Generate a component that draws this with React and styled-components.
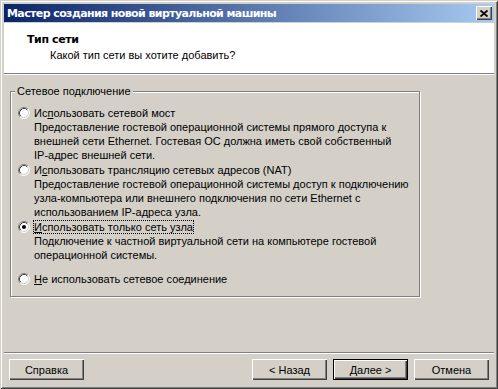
import React from "react";
import styled, { createGlobalStyle } from "styled-components";

const GlobalStyle = createGlobalStyle`
  html, body {
    margin: 0;
    padding: 0;
    background: #d4d0c8;
  }
  body {
    font-family: "Liberation Sans", Arial, sans-serif;
    font-size: 11px;
    color: #000;
  }
`;

const options = [
  {
    id: "bridge",
    label: ["Ис", "п", "ользовать сетевой мост"],
    desc: [
      "Предоставление гостевой операционной системы прямого доступа к",
      "внешней сети Ethernet. Гостевая ОС должна иметь свой собственный",
      "IP-адрес внешней сети.",
    ],
  },
  {
    id: "nat",
    label: ["И", "с", "пользовать трансляцию сетевых адресов (NAT)"],
    desc: [
      "Предоставление гостевой операционной системы доступ к подключению",
      "узла-компьютера или внешнего подключения по сети Ethernet с",
      "использованием IP-адреса узла.",
    ],
  },
  {
    id: "host",
    label: ["", "И", "спользовать только сеть узла"],
    desc: [
      "Подключение к частной виртуальной сети на компьютере гостевой",
      "операционной системы.",
    ],
    checked: true,
  },
  {
    id: "none",
    label: ["", "Н", "е использовать сетевое соединение"],
    desc: [],
    spaced: true,
  },
];

const Radio = ({ checked }) => (
  <RadioIcon width="12" height="12" viewBox="0 0 12 12">
    <circle cx="6" cy="6" r="5" fill="#fff" />
    <path d="M2.11 9.89 A5.5 5.5 0 0 1 9.89 2.11" fill="none" stroke="#808080" strokeWidth="1" />
    <path d="M9.89 2.11 A5.5 5.5 0 0 1 2.11 9.89" fill="none" stroke="#ffffff" strokeWidth="1" />
    <path d="M2.82 9.18 A4.5 4.5 0 0 1 9.18 2.82" fill="none" stroke="#404040" strokeWidth="1" />
    <path d="M9.18 2.82 A4.5 4.5 0 0 1 2.82 9.18" fill="none" stroke="#d4d0c8" strokeWidth="1" />
    {checked && <circle cx="6" cy="6" r="2" fill="#000" />}
  </RadioIcon>
);

export default function App() {
  return (
    <>
      <GlobalStyle />
      <Window>
        <TitleBar>
          <Title>Мастер создания новой виртуальной машины</Title>
          <CloseButton>
            <svg width="8" height="7" viewBox="0 0 8 7">
              <path d="M0.5 0.5 L7.5 6.5 M7.5 0.5 L0.5 6.5" stroke="#000" strokeWidth="1.8" />
            </svg>
          </CloseButton>
        </TitleBar>
        <Client>
          <Header>
            <HeaderTitle>Тип сети</HeaderTitle>
            <HeaderSub>Какой тип сети вы хотите добавить?</HeaderSub>
          </Header>
          <Body>
            <GroupBox>
              <Legend>Сетевое подключение</Legend>
              {options.map((o) => (
                <Option key={o.id} $spaced={o.spaced}>
                  <RadioRow>
                    <Radio checked={o.checked} />
                    <Label $focused={o.checked}>
                      {o.label[0]}
                      <u>{o.label[1]}</u>
                      {o.label[2]}
                    </Label>
                  </RadioRow>
                  {o.desc.length > 0 && (
                    <Desc>
                      {o.desc.map((line) => (
                        <div key={line}>{line}</div>
                      ))}
                    </Desc>
                  )}
                </Option>
              ))}
            </GroupBox>
          </Body>
          <Footer>
            <Button>Справка</Button>
            <Spacer />
            <Button>&lt; Назад</Button>
            <Button $default>Далее &gt;</Button>
            <Button>Отмена</Button>
          </Footer>
        </Client>
      </Window>
    </>
  );
}

const Window = styled.div`
  width: 498px;
  height: 389px;
  box-sizing: border-box;
  display: flex;
  flex-direction: column;
  background: #d4d0c8;
  padding: 4px;
  box-shadow: inset 1px 1px 0 #d4d0c8, inset -1px -1px 0 #404040,
    inset 2px 2px 0 #ffffff, inset -2px -2px 0 #808080;
`;

const TitleBar = styled.div`
  height: 18px;
  display: flex;
  align-items: center;
  justify-content: space-between;
  padding: 0 2px 0 3px;
  background: linear-gradient(to right, #0a246a, #a6caf0);
`;

const Title = styled.div`
  color: #fff;
  font-family: "DejaVu Sans", sans-serif;
  font-weight: bold;
  font-size: 11px;
  letter-spacing: -0.6px;
  white-space: nowrap;
`;

const CloseButton = styled.div`
  width: 16px;
  height: 14px;
  box-sizing: border-box;
  display: flex;
  align-items: center;
  justify-content: center;
  background: #d4d0c8;
  box-shadow: inset 1px 1px 0 #ffffff, inset -1px -1px 0 #404040,
    inset -2px -2px 0 #808080;
`;

const Client = styled.div`
  flex: 1;
  display: flex;
  flex-direction: column;
  margin-top: 1px;
`;

const Header = styled.div`
  height: 51px;
  box-sizing: border-box;
  background: #fff;
  padding: 10px 0 0 23px;
  border-bottom: 1px solid #808080;
  box-shadow: 0 1px 0 #fff;
`;

const HeaderTitle = styled.div`
  font-family: "DejaVu Sans", sans-serif;
  font-weight: bold;
  letter-spacing: -0.4px;
  line-height: 13px;
`;

const HeaderSub = styled.div`
  margin-top: 3px;
  padding-left: 23px;
  line-height: 13px;
`;

const Body = styled.div`
  flex: 1;
  padding: 11px 0 0 6px;
`;

const GroupBox = styled.fieldset`
  width: 410px;
  min-width: 0;
  min-inline-size: 0;
  height: 212px;
  box-sizing: border-box;
  margin: 0;
  padding: 7px 0 0 0;
  border: 1px solid #808080;
  box-shadow: inset 1px 1px 0 #fff, 1px 1px 0 #fff;
`;

const Legend = styled.legend`
  margin-left: 4px;
  padding: 0 2px;
  line-height: 13px;
  background: #d4d0c8;
`;

const Option = styled.div`
  margin-top: ${(p) => (p.$spaced ? "9px" : "0")};
`;

const RadioRow = styled.div`
  height: 15px;
  display: flex;
  align-items: center;
  padding-left: 7px;
`;

const RadioIcon = styled.svg`
  flex: none;
  margin-right: 3px;
`;

const Label = styled.span`
  line-height: 12px;
  border: 1px ${(p) => (p.$focused ? "dotted #000" : "solid transparent")};
  white-space: nowrap;
`;

const Desc = styled.div`
  padding-left: 23px;
  line-height: 14px;
  white-space: nowrap;
`;

const Footer = styled.div`
  display: flex;
  align-items: center;
  gap: 6px;
  padding: 6px 5px 5px 5px;
  border-top: 1px solid #808080;
  box-shadow: inset 0 1px 0 #fff;
`;

const Spacer = styled.div`
  flex: 1;
`;

const Button = styled.button`
  width: 75px;
  height: 21px;
  padding: 0;
  font-family: inherit;
  font-size: 11px;
  color: #000;
  background: #d4d0c8;
  border: 0;
  border-radius: 0;
  box-shadow: ${(p) =>
    p.$default
      ? "inset 0 0 0 1px #000, inset 1px 1px 0 1px #fff, inset -1px -1px 0 1px #404040, inset -2px -2px 0 1px #808080"
      : "inset 1px 1px 0 #fff, inset -1px -1px 0 #404040, inset -2px -2px 0 #808080"};
`;
